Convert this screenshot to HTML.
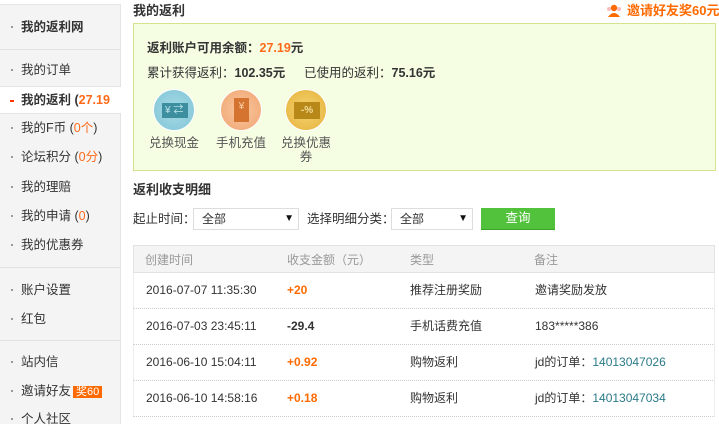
<!DOCTYPE html>
<html><head><meta charset="utf-8"><style>
*{margin:0;padding:0;box-sizing:border-box}
body{width:719px;height:416px;overflow:hidden;background:#fff;font-family:"Liberation Sans","Noto Sans CJK SC",sans-serif;font-size:12px;color:#333;position:relative;line-height:16px}
.abs{position:absolute;white-space:nowrap;line-height:16px}
#side{position:absolute;left:0;top:4px;width:121px;height:420px;background:#f4f4f4;border-top:1px solid #e4e4e4;border-right:1px solid #e4e4e4}
.it{position:absolute;left:0;width:120px;height:28px;line-height:28px;padding-left:21px;font-size:12.5px;color:#333;white-space:nowrap;overflow:hidden}
.it:before{content:"";position:absolute;left:11px;top:13px;width:2px;height:2px;background:#999}
.dv{position:absolute;left:0;width:120px;height:1px;background:#e2e2e2}
.o{color:#ff6a1a}
.circ{position:absolute;width:42px;height:42px;border-radius:50%}
.lab{position:absolute;font-size:12.5px;color:#555;text-align:center;width:60px;line-height:14px}
.sel{position:absolute;height:22px;border:1px solid #ddd;background:#fff;font-size:12px;line-height:20px;padding-left:8px}
.sel:after{content:"▼";position:absolute;right:4px;top:0;font-size:10px;color:#111}
.row{position:absolute;left:133px;width:582px;height:36px;border-bottom:1px dotted #ccc;border-left:1px solid #eee;border-right:1px solid #eee}
.row>span{position:absolute;top:10px;font-size:12px;line-height:14px;height:14px;white-space:nowrap}
</style></head><body>
<div id="side">
<div class="it" style="top:8px;font-weight:bold">我的返利网</div>
<div class="dv" style="top:44px"></div>
<div class="it" style="top:51px">我的订单</div>
<div class="it" style="top:81px;background:#fff;height:28px;font-weight:bold;border-top:1px solid #e4e4e4;border-bottom:1px solid #e4e4e4;line-height:26px;width:121px">我的返利 (<span class="o">27.19</span></div>
<style>#side .it:nth-child(4):before{background:#f30;width:4px;left:10px}</style>
<div class="it" style="top:109px">我的F币 (<span class="o">0个</span>)</div>
<div class="it" style="top:138px">论坛积分 (<span class="o">0分</span>)</div>
<div class="it" style="top:168px">我的理赔</div>
<div class="it" style="top:197px">我的申请 (<span class="o">0</span>)</div>
<div class="it" style="top:226px">我的优惠券</div>
<div class="dv" style="top:262px"></div>
<div class="it" style="top:271px">账户设置</div>
<div class="it" style="top:300px">红包</div>
<div class="dv" style="top:335px"></div>
<div class="it" style="top:343px">站内信</div>
<div class="it" style="top:372px">邀请好友<span style="background:#ff6a00;color:#fff;font-size:11px;padding:0 3px;margin-left:2px">奖60</span></div>
<div class="it" style="top:400px">个人社区</div>
</div>

<div class="abs" style="left:133px;top:3px;font-size:13px;font-weight:bold;color:#333">我的返利</div>
<div class="abs" style="left:606px;top:4px;width:16px;height:14px"><svg width="16" height="14"><circle cx="8" cy="4" r="3.2" fill="#ff6a00"/><path d="M2 13 Q8 5 14 13Z" fill="#ff6a00"/><circle cx="3" cy="5" r="2" fill="#fbb"/><circle cx="13" cy="5" r="2" fill="#fbb"/></svg></div>
<div class="abs" style="left:627px;top:3px;font-size:13px;font-weight:bold;color:#ff6a00">邀请好友奖60元</div>

<div style="position:absolute;left:133px;top:23px;width:583px;height:148px;background:#f5fde3;border:1px solid #d4e38c"></div>
<div class="abs" style="left:147px;top:40px;font-size:12.5px;font-weight:bold">返利账户可用余额：<span class="o">27.19</span>元</div>
<div class="abs" style="left:147px;top:65px;font-size:12.5px">累计获得返利：<b>102.35元</b></div>
<div class="abs" style="left:304px;top:65px;font-size:12.5px">已使用的返利：<b>75.16元</b></div>
<div class="circ" style="left:153px;top:89px;background:radial-gradient(#a8dbe6,#7fc4d6);border:1px solid #fff"><div style="position:absolute;left:8px;top:13px;width:26px;height:15px;background:#3d8fa0;color:#bfe7ef;font-size:10px;line-height:15px;padding-left:3px">¥ ⇄</div></div>
<div class="circ" style="left:220px;top:89px;background:radial-gradient(#f9c8a0,#f0a470);border:1px solid #fff"><div style="position:absolute;left:13px;top:8px;width:15px;height:24px;background:#d47430;color:#fbd2ae;font-size:10px;line-height:18px;text-align:center">¥</div></div>
<div class="circ" style="left:285px;top:89px;background:radial-gradient(#f4d470,#e6b13c);border:1px solid #fff"><div style="position:absolute;left:8px;top:12px;width:26px;height:17px;background:#b88818;color:#f6de9a;font-size:10px;line-height:17px;text-align:center;font-weight:bold">-%</div></div>
<div class="lab" style="left:144px;top:136px">兑换现金</div>
<div class="lab" style="left:211px;top:136px">手机充值</div>
<div class="lab" style="left:276px;top:136px;width:60px">兑换优惠<br>券</div>

<div class="abs" style="left:133px;top:182px;font-size:13px;font-weight:bold">返利收支明细</div>
<div class="abs" style="left:133px;top:211px;font-size:12.5px">起止时间：</div>
<div class="sel" style="left:193px;top:208px;width:106px">全部</div>
<div class="abs" style="left:307px;top:211px;font-size:12.5px">选择明细分类：</div>
<div class="sel" style="left:391px;top:208px;width:82px">全部</div>
<div class="abs" style="left:481px;top:208px;width:74px;height:22px;background:#52c13b;border-bottom:1px solid #3fa02a;color:#fff;text-align:center;line-height:21px;font-size:12.5px">查询</div>

<div style="position:absolute;left:133px;top:245px;width:582px;height:28px;background:#f4f4f4;border:1px solid #e2e2e2"></div>
<div class="abs" style="left:145px;top:252px;color:#999;font-size:12px">创建时间</div>
<div class="abs" style="left:287px;top:252px;color:#999;font-size:12px">收支金额（元）</div>
<div class="abs" style="left:410px;top:252px;color:#999;font-size:12px">类型</div>
<div class="abs" style="left:534px;top:252px;color:#999;font-size:12px">备注</div>

<div class="row" style="top:273px"><span style="left:12px">2016-07-07 11:35:30</span><span style="left:153px;color:#ff6a00;font-weight:bold">+20</span><span style="left:276px">推荐注册奖励</span><span style="left:401px">邀请奖励发放</span></div>
<div class="row" style="top:309px"><span style="left:12px">2016-07-03 23:45:11</span><span style="left:153px;font-weight:bold">-29.4</span><span style="left:276px">手机话费充值</span><span style="left:401px">183*****386</span></div>
<div class="row" style="top:345px"><span style="left:12px">2016-06-10 15:04:11</span><span style="left:153px;color:#ff6a00;font-weight:bold">+0.92</span><span style="left:276px">购物返利</span><span style="left:401px">jd的订单：<span style="color:#2a7a8a">14013047026</span></span></div>
<div class="row" style="top:381px"><span style="left:12px">2016-06-10 14:58:16</span><span style="left:153px;color:#ff6a00;font-weight:bold">+0.18</span><span style="left:276px">购物返利</span><span style="left:401px">jd的订单：<span style="color:#2a7a8a">14013047034</span></span></div>
</body></html>
